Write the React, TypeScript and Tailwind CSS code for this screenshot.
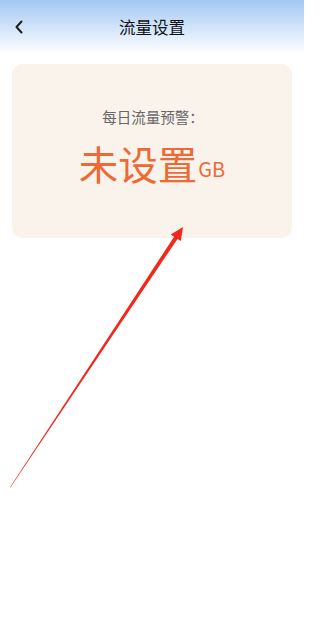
import React from "react";

export default function App() {
  return (
    <div
      className="relative w-[304px] h-[640px] bg-white overflow-hidden"
      style={{ fontFamily: '"Noto Sans CJK SC", "Noto Sans", sans-serif' }}
    >
      <div className="h-[54px] bg-gradient-to-b from-[#a3c8f3] to-white flex items-center relative">
        <div className="absolute left-[13px] top-[19px] w-[12px] h-[16px] flex items-center">
          <svg width="12" height="16" viewBox="0 0 12 16">
            <path d="M8.5 2.5 L3.5 8 L8.5 13.5" fill="none" stroke="#1f1f1f" strokeWidth="2" strokeLinecap="round" strokeLinejoin="round" />
          </svg>
        </div>
        <div className="flex-1 text-center text-[16.5px] font-normal text-[#111111] leading-none">流量设置</div>
      </div>
      <div className="px-[12px] pt-[10px]">
        <div className="h-[174px] rounded-[10px] bg-[#faf3ec] flex flex-col items-center pt-[46px]">
          <div className="text-[14.5px] text-[#666666] leading-none pl-[2px]">每日流量预警：</div>
          <div className="mt-[18px] flex items-end text-[#ee6a34] leading-none">
            <span className="text-[39.5px] leading-none">未设置</span>
            <span className="text-[20px] leading-none mb-[3px] ml-[1px]">GB</span>
          </div>
        </div>
      </div>
      <svg className="absolute left-0 top-0 pointer-events-none" width="304" height="640" viewBox="0 0 304 640">
        <polygon
          points="10,487.2 174.1,236.7 170.8,234.5 183,227 180.8,241.1 177.5,238.9 10.4,487.5"
          fill="#f2281b"
        />
      </svg>
    </div>
  );
}
